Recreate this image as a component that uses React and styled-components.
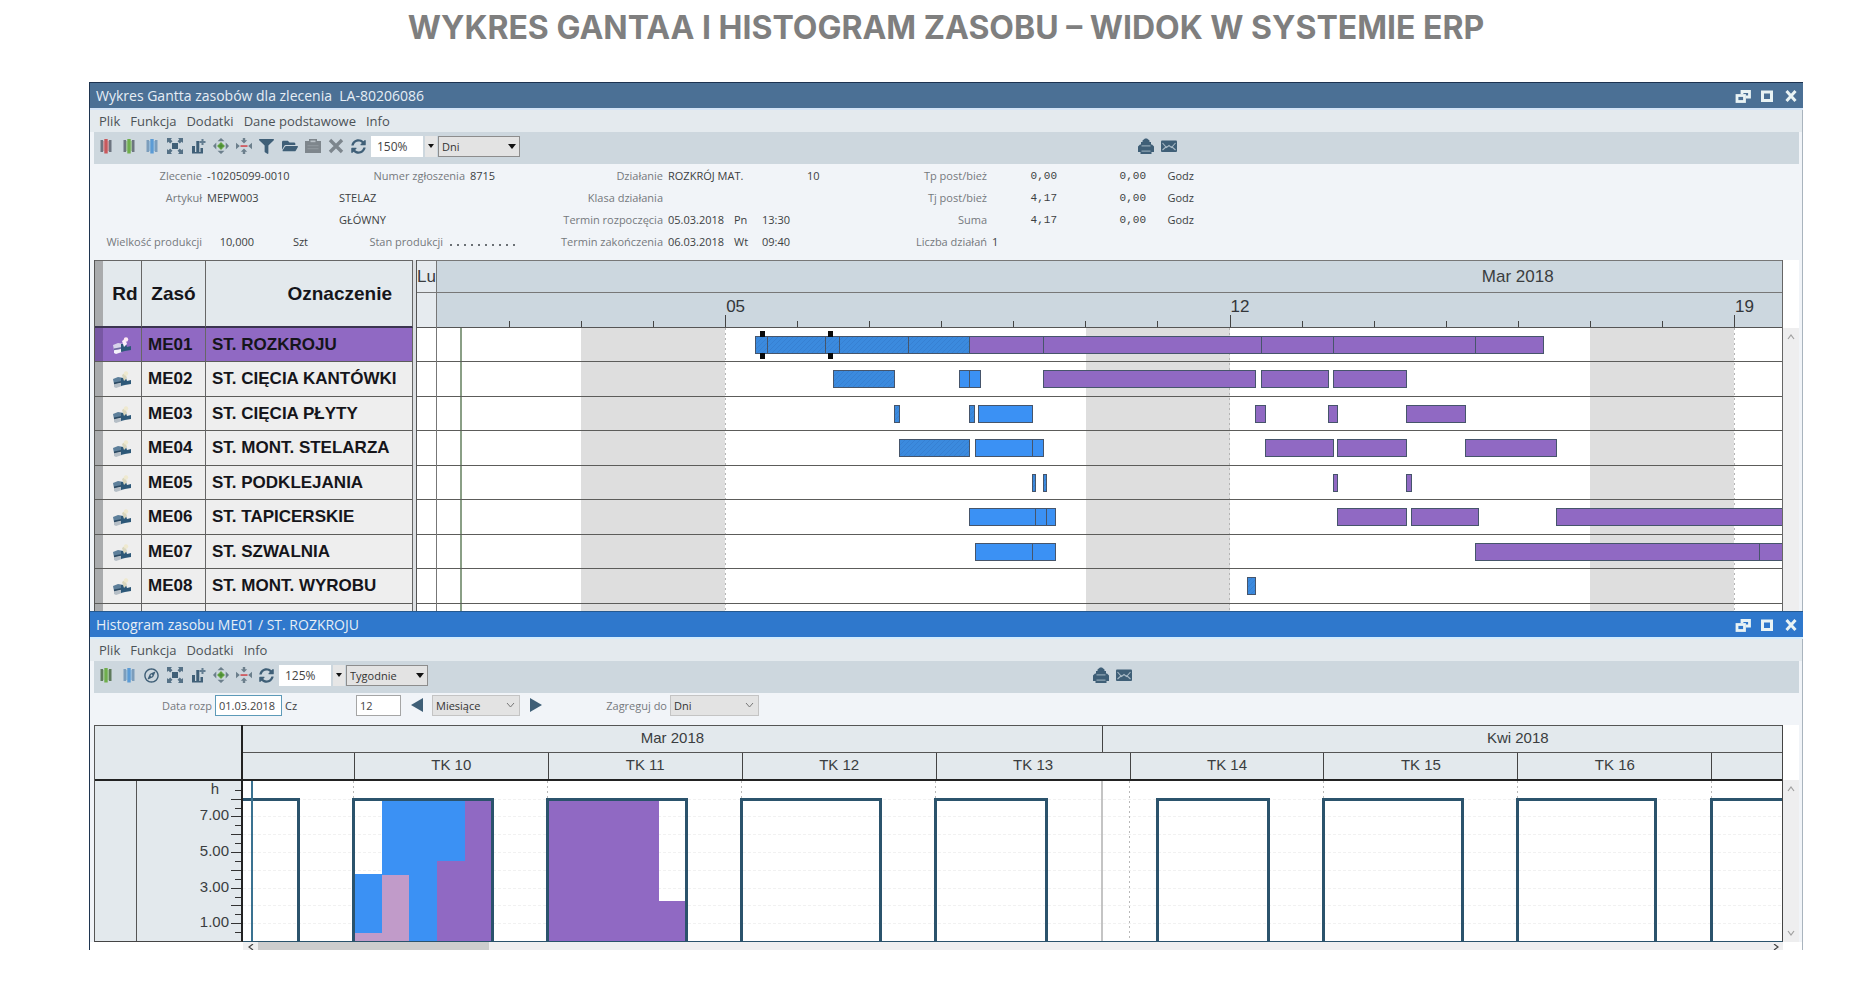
import React from 'react'
import styled, { createGlobalStyle, css } from 'styled-components'
import { FaFilter, FaFolderOpen, FaSyncAlt, FaRegCompass } from 'react-icons/fa'

// gantt time scale: hours since 1 March, 00:00
const GANTT_HOURS = 448
// histogram time scale: days since 1 March
const HIST_DAYS = 55.55
const HOUR_PX = 18
const HIST_HEIGHT = 160

const hx = (h) => `${(h / GANTT_HOURS) * 100}%`
const dx = (d) => `${(d / HIST_DAYS) * 100}%`
const laneTop = (i) => Math.floor(i * 34.5)
const loadY = (h) => HIST_HEIGHT - h * HOUR_PX + Math.round(h * 0.2)

const resources = [
  {
    id: 'ME01',
    name: 'ST. ROZKROJU',
    bars: [
      { k: 'hatch', s: [106, 110, 129.5, 134, 157, 177.5] },
      { k: 'plan', s: [177.5, 202, 274.5, 298.5, 346, 368.5] },
    ],
  },
  {
    id: 'ME02',
    name: 'ST. CIĘCIA KANTÓWKI',
    bars: [
      { k: 'hatch', s: [132, 152.5] },
      { k: 'work', s: [174, 177.5, 181] },
      { k: 'plan', s: [202, 272.5] },
      { k: 'plan', s: [274.5, 297] },
      { k: 'plan', s: [298.5, 323] },
    ],
  },
  {
    id: 'ME03',
    name: 'ST. CIĘCIA PŁYTY',
    bars: [
      { k: 'hatch', s: [152.5, 154] },
      { k: 'hatch', s: [177.5, 179] },
      { k: 'work', s: [180.5, 198.5] },
      { k: 'plan', s: [272.5, 276] },
      { k: 'plan', s: [297, 300] },
      { k: 'plan', s: [323, 342.5] },
    ],
  },
  {
    id: 'ME04',
    name: 'ST. MONT. STELARZA',
    bars: [
      { k: 'hatch', s: [154, 177.5] },
      { k: 'work', s: [179.5, 198.5, 202] },
      { k: 'plan', s: [276, 298.5] },
      { k: 'plan', s: [300, 323] },
      { k: 'plan', s: [342.5, 373] },
    ],
  },
  {
    id: 'ME05',
    name: 'ST. PODKLEJANIA',
    bars: [
      { k: 'hatch', s: [198.5, 199.5] },
      { k: 'hatch', s: [202, 203] },
      { k: 'plan', s: [298.5, 300] },
      { k: 'plan', s: [323, 324.5] },
    ],
  },
  {
    id: 'ME06',
    name: 'ST. TAPICERSKIE',
    bars: [
      { k: 'work', s: [177.5, 199.5, 203, 206] },
      { k: 'plan', s: [300, 323] },
      { k: 'plan', s: [324.5, 347] },
      { k: 'plan', s: [373, 450] },
    ],
  },
  {
    id: 'ME07',
    name: 'ST. SZWALNIA',
    bars: [
      { k: 'work', s: [179.5, 198.5, 206] },
      { k: 'plan', s: [346, 440.5, 450] },
    ],
  },
  {
    id: 'ME08',
    name: 'ST. MONT. WYROBU',
    bars: [{ k: 'hatch', s: [270, 272.5] }],
  },
]

const fills = { hatch: 'url(#hatch)', work: '#3b91f4', plan: '#9069c3' }

// [day, from hour, to hour, colour]
const load = [
  [4, 0, 0.45, '#c19bc9'],
  [4, 0.45, 3.8, '#3b91f4'],
  [5, 0, 3.7, '#c19bc9'],
  [5, 3.7, 8, '#3b91f4'],
  [6, 0, 8, '#3b91f4'],
  [7, 0, 4.5, '#9069c3'],
  [7, 4.5, 8, '#3b91f4'],
  [8, 0, 8, '#9069c3'],
  [11, 0, 8, '#9069c3'],
  [12, 0, 8, '#9069c3'],
  [13, 0, 8, '#9069c3'],
  [14, 0, 8, '#9069c3'],
  [15, 0, 2.2, '#9069c3'],
]

const capacity = [[-1, 2], [4, 9], [11, 16], [18, 23], [25, 29], [33, 37], [39, 44], [46, 51], [53, 58]]

const weeks = [
  ['', 4],
  ['TK 10', 7],
  ['TK 11', 7],
  ['TK 12', 7],
  ['TK 13', 7],
  ['TK 14', 7],
  ['TK 15', 7],
  ['TK 16', 7],
  ['', 2.55],
]

/* ---------- icons ---------- */

const dark = '#3f5f77'

const Svg = ({ children, size = 16 }) => (
  <svg width={size} height={size} viewBox="0 0 16 16" aria-hidden="true">
    {children}
  </svg>
)

const BarsIcon = ({ color, side = '#6d7580' }) => (
  <Svg>
    <path d="M2.500 2v12h2.600V2zM10.900 2v12h2.600V2z" fill={side} />
    <path d="M6.300 1h3.400v14.500H6.300z" fill={color} />
    <path d="M5 3h1.300v10H5zM9.700 3H11v10H9.700z" fill={color} opacity=".45" />
  </Svg>
)

const FitIcon = () => (
  <Svg>
    <path d="M0 0h5L3.700 1.400 5.500 3.200 3.200 5.500 1.400 3.700 0 5zM16 0v5l-1.400-1.300-1.800 1.800-2.300-2.300 1.800-1.800L11 0zM0 16v-5l1.400 1.300 1.800-1.800 2.300 2.300-1.800 1.800L5 16zM16 16h-5l1.300-1.400-1.800-1.800 2.300-2.300 1.800 1.800L16 11z" fill={dark} opacity=".85" />
    <path d="M5 5h6v6H5z" fill={dark} />
  </Svg>
)

const ChartPlusIcon = () => (
  <Svg>
    <path d="M2 8h3v7H2zM6.300 3h3v12h-3zM2 14h11v1.600H2zM10.500 10h2.500v5h-2.500z" fill={dark} />
    <path d="M11.500 1h2v2h2v2h-2v2h-2V5h-2V3h2z" fill={dark} opacity=".75" />
  </Svg>
)

const ExpandIcon = () => (
  <Svg>
    <path d="M8 0l3.500 3.300h-7zM8 16l3.500-3.300h-7zM0 8l3.300-3.500v7zM16 8l-3.300-3.500v7z" fill="#6c7f8c" />
    <path d="M8 4l4 4-4 4-4-4z" fill="#6cac4a" />
    <path d="M7.300 5.500h1.400v1.800h1.800v1.400H8.700v1.800H7.300V8.700H5.500V7.300h1.800z" fill="#4b8a35" />
  </Svg>
)

const CollapseIcon = () => (
  <Svg>
    <path d="M8 5.500L4.800 2.200h2V0h2.400v2.200h2zM8 10.500l-3.200 3.300h2V16h2.400v-2.200h2zM3.800 8L0 4.800v6.400zM12.200 8L16 4.800v6.400z" fill="#6c7f8c" />
    <path d="M4.500 7.200h7v1.700h-7z" fill="#cf5358" />
  </Svg>
)

const ClipboardIcon = () => (
  <Svg>
    <path d="M0 3h4V1h8v2h4v12H0z" fill="#7e868c" />
    <path d="M5.500 2.500h5v1.700h-5z" fill="#b9c1c7" />
    <path d="M2.500 7h11v1.200h-11zM2.500 10h11v1.200h-11z" fill="#8e969c" />
  </Svg>
)

const CrossIcon = () => (
  <Svg>
    <path d="M2 2l12 12M14 2L2 14" stroke="#7d868d" strokeWidth="3.400" fill="none" />
  </Svg>
)

const PrinterIcon = () => (
  <Svg>
    <path d="M4.500 4V2.500L7 .5h2l2.500 2V4h1.500v2.500h1l2 2V14h-2.500v2h-11v-2H0V8.500l2-2h1V4z" fill={dark} />
    <path d="M3.500 7.300h9v1.200h-9zM3.500 12.500h9v1.200h-9z" fill="#8fa5b4" />
  </Svg>
)

const MailIcon = () => (
  <Svg>
    <rect x="0" y="2.500" width="16" height="11.500" rx="1" fill={dark} />
    <path d="M1.500 5l4 4.500L8 7.500l2.500 2 4-4.500M1.500 12l4-3.500M14.500 12l-4-3.500" stroke="#a9bac6" strokeWidth="1.100" fill="none" />
  </Svg>
)

const RestoreIcon = () => (
  <Svg>
    <path d="M7 6V3.500h7.500V9H11" stroke="#e9f3f4" strokeWidth="2.800" fill="none" />
    <rect x="2" y="7.500" width="7.500" height="6" stroke="#e9f3f4" strokeWidth="2.800" fill="none" />
  </Svg>
)

const MaximizeIcon = () => (
  <Svg>
    <rect x="3.500" y="4" width="9" height="8.500" stroke="#e9f3f4" strokeWidth="3" fill="none" />
  </Svg>
)

const CloseIcon = () => (
  <Svg>
    <path d="M3.500 3l9 10M12.500 3l-9 10" stroke="#e9f3f4" strokeWidth="3" fill="none" />
  </Svg>
)

const MachineIcon = ({ light }) => (
  <svg width="20" height="20" viewBox="0 0 20 20" aria-hidden="true">
    <path d="M1 9l5-2 6 1-1 4-9 2z" fill={light ? '#d7d3ea' : '#5d7f9a'} />
    <path d="M2 14l7-1 1 3-6 2-2-1z" fill={light ? '#f3f1fa' : '#b5bec6'} />
    <path d="M2 12.500l8-1.500v1.600l-8 1.600z" fill={light ? '#6c6aa0' : '#2c4a63'} />
    <path d="M9 8h5l1 3 4-1v4l-6 1-4 1z" fill="#2d5878" />
    <path d="M10 5l3-2 2 5-3 3z" fill={light ? '#fbeefa' : '#d9d6bd'} />
    <circle cx="14" cy="3.500" r="2.200" fill={light ? '#ffe9f4' : '#efe9cf'} />
  </svg>
)

const chevrons = {
  up: 'M1 5l3-4 3 4',
  down: 'M1 1l3 4 3-4',
  left: 'M6 0L2 3l4 3',
  right: 'M2 0l4 3-4 3',
}

const Chevron = ({ dir, color = '#a0a0a0' }) => (
  <svg width="8" height="6" viewBox="0 0 8 6" aria-hidden="true">
    <path d={chevrons[dir]} stroke={color} strokeWidth="1.200" fill="none" />
  </svg>
)

/* ---------- parts ---------- */

const Window = ({ title, active, children }) => (
  <Frame>
    <TitleBar $active={active}>
      <Title>{title}</Title>
      <WindowButton aria-label="Przywróć"><RestoreIcon /></WindowButton>
      <WindowButton aria-label="Maksymalizuj"><MaximizeIcon /></WindowButton>
      <WindowButton aria-label="Zamknij"><CloseIcon /></WindowButton>
    </TitleBar>
    {children}
  </Frame>
)

const Tools = ({ items }) =>
  items.map(([label, icon]) => (
    <Tool key={label} aria-label={label}>{icon}</Tool>
  ))

const sendTools = [
  ['Drukuj', <PrinterIcon />],
  ['Wyślij', <MailIcon />],
]

const ganttTools = [
  ['Czerwone', <BarsIcon color="#c8585c" />],
  ['Zielone', <BarsIcon color="#6fae4c" />],
  ['Niebieskie', <BarsIcon color="#5b9bd5" side="#7c9dbb" />],
  ['Dopasuj', <FitIcon />],
  ['Wykres', <ChartPlusIcon />],
  ['Rozwiń', <ExpandIcon />],
  ['Zwiń', <CollapseIcon />],
  ['Filtr', <FaFilter size={15} />],
  ['Otwórz', <FaFolderOpen size={16} />],
  ['Zapisz', <ClipboardIcon />],
  ['Usuń', <CrossIcon />],
  ['Odśwież', <FaSyncAlt size={15} />],
]

const histTools = [
  ['Zielone', <BarsIcon color="#6fae4c" side="#5f7a5c" />],
  ['Niebieskie', <BarsIcon color="#5b9bd5" side="#7c9dbb" />],
  ['Kompas', <FaRegCompass size={15} />],
  ['Dopasuj', <FitIcon />],
  ['Wykres', <ChartPlusIcon />],
  ['Rozwiń', <ExpandIcon />],
  ['Zwiń', <CollapseIcon />],
  ['Odśwież', <FaSyncAlt size={15} />],
]

const OrderInfo = () => (
  <Info>
    <InfoGroup $w={245}>
      <InfoRow><Label $w={108}>Zlecenie</Label><Value>-10205099-0010</Value></InfoRow>
      <InfoRow><Label $w={108}>Artykuł</Label><Value>MEPW003</Value></InfoRow>
      <InfoRow />
      <InfoRow>
        <Label $w={108}>Wielkość produkcji</Label>
        <Value $w={47} $right>10,000</Value>
        <Value $w={49} $right>Szt</Value>
      </InfoRow>
    </InfoGroup>
    <InfoGroup $w={216}>
      <InfoRow><Label $w={126}>Numer zgłoszenia</Label><Value>8715</Value></InfoRow>
      <InfoRow><Value>STELAZ</Value></InfoRow>
      <InfoRow><Value>GŁÓWNY</Value></InfoRow>
      <InfoRow><Label $w={104}>Stan produkcji</Label><Dots /></InfoRow>
    </InfoGroup>
    <InfoGroup $w={340}>
      <InfoRow><Label $w={108}>Działanie</Label><Value $w={134}>ROZKRÓJ MAT.</Value><Value>10</Value></InfoRow>
      <InfoRow><Label $w={108}>Klasa działania</Label></InfoRow>
      <InfoRow>
        <Label $w={108}>Termin rozpoczęcia</Label>
        <Value $w={61}>05.03.2018</Value><Value $w={23}>Pn</Value><Value>13:30</Value>
      </InfoRow>
      <InfoRow>
        <Label $w={108}>Termin zakończenia</Label>
        <Value $w={61}>06.03.2018</Value><Value $w={23}>Wt</Value><Value>09:40</Value>
      </InfoRow>
    </InfoGroup>
    <InfoGroup $w={320}>
      {[['Tp post/bież', '0,00'], ['Tj post/bież', '4,17'], ['Suma', '4,17']].map(([label, v]) => (
        <InfoRow key={label}>
          <Label $w={92}>{label}</Label>
          <Value $w={65} $right $mono>{v}</Value>
          <Value $w={84} $right $mono>0,00</Value>
          <Value $w={43} $right>Godz</Value>
        </InfoRow>
      ))}
      <InfoRow><Label $w={92}>Liczba działań</Label><Value>1</Value></InfoRow>
    </InfoGroup>
  </Info>
)

const LaneLines = () =>
  resources.map((r, i) => (
    <line key={r.id} x1="0" x2="100%" y1={laneTop(i + 1) - 0.5} y2={laneTop(i + 1) - 0.5} stroke="#5c5c5a" />
  ))

const GanttPlot = () => (
  <Plot height="284" shapeRendering="crispEdges" role="img" aria-label="Wykres Gantta">
    <defs>
      <pattern id="hatch" width="5" height="5" patternUnits="userSpaceOnUse">
        <rect width="5" height="5" fill="#3b8ade" />
        <path d="M0 5L5 0" stroke="#3780d2" strokeWidth="1" shapeRendering="auto" />
      </pattern>
    </defs>
    {[48, 216, 384].map((h) => (
      <g key={h}>
        <rect x={hx(h)} y="0" width={hx(48)} height="284" fill="#dedede" />
        <line x1={hx(h + 48)} x2={hx(h + 48)} y1="0" y2="284" stroke="#b5b5b5" strokeDasharray="2 3" />
      </g>
    ))}
    <line x1={hx(8)} x2={hx(8)} y1="0" y2="284" stroke="#8a9f86" strokeWidth="2" />
    <LaneLines />
    {resources.map((r, i) =>
      r.bars.map((b) => {
        const y = laneTop(i) + 8
        const end = b.s[b.s.length - 1]
        return (
          <g key={b.s[0]} stroke="#46556b" strokeWidth="1">
            <rect x={hx(b.s[0])} y={y + 0.5} width={hx(end - b.s[0])} height="17" fill={fills[b.k]} />
            {b.s.slice(1, -1).map((s) => (
              <line key={s} x1={hx(s)} x2={hx(s)} y1={y} y2={y + 18} />
            ))}
          </g>
        )
      })
    )}
    {[108.5, 131].map((h) => (
      <g key={h} stroke="#0a0a0a" strokeWidth="5">
        <line x1={hx(h)} x2={hx(h)} y1="3" y2="9" />
        <line x1={hx(h)} x2={hx(h)} y1="25" y2="31" />
      </g>
    ))}
  </Plot>
)

const Gantt = () => (
  <GanttBody>
    <ResourceTable>
      <thead>
        <tr>
          <th className="strip" />
          <th className="rd">Rd</th>
          <th className="code">Zasó</th>
          <th className="name">Oznaczenie</th>
        </tr>
      </thead>
      <tbody>
        {resources.map((r, i) => (
          <ResourceRow key={r.id} $selected={i === 0}>
            <td className="strip" />
            <td className="rd"><MachineIcon light={i === 0} /></td>
            <td>{r.id}</td>
            <td>{r.name}</td>
          </ResourceRow>
        ))}
        <ResourceRow>
          <td className="strip" /><td /><td /><td />
        </ResourceRow>
      </tbody>
    </ResourceTable>
    <Splitter />
    <SideColumn>
      <MonthBand $light>Lu</MonthBand>
      <DayBand $light />
      <Plot height="284" shapeRendering="crispEdges" aria-hidden="true">
        <LaneLines />
      </Plot>
    </SideColumn>
    <Timeline>
      <MonthBand>
        <MonthLabel style={{ width: hx(30 * 24) }}>Mar 2018</MonthLabel>
      </MonthBand>
      <DayBand>
        {[...Array(18)].map((_, i) => {
          const day = i + 2
          const monday = day % 7 === 5
          return (
            <DayTick key={day} $tall={monday} style={{ left: hx((day - 1) * 24) }}>
              {monday && <DayLabel>{String(day).padStart(2, '0')}</DayLabel>}
            </DayTick>
          )
        })}
      </DayBand>
      <GanttPlot />
    </Timeline>
    <Gutter $top={68}>
      <Chevron dir="up" />
    </Gutter>
  </GanttBody>
)

const Axis = () => (
  <AxisSvg shapeRendering="crispEdges">
    {[...Array(17)].map((_, i) => {
      const h = (i + 1) / 2
      return <line key={h} x1={h % 1 ? 98 : 94} x2="104" y1={loadY(h)} y2={loadY(h)} stroke="#333" />
    })}
    <text x="78" y="13" textAnchor="middle">h</text>
    {[7, 5, 3, 1].map((h) => (
      <text key={h} x="92" y={loadY(h) + 4} textAnchor="end">{h}.00</text>
    ))}
  </AxisSvg>
)

const HistogramPlot = () => {
  const top = loadY(8)
  return (
    <Plot height={HIST_HEIGHT} shapeRendering="crispEdges" role="img" aria-label="Histogram zasobu">
      {[1, 2, 3, 4, 5, 6, 7, 8].map((h) => (
        <line key={h} x1="0" x2="100%" y1={loadY(h)} y2={loadY(h)} stroke="#f1f1f1" strokeDasharray="3 2" />
      ))}
      {[4, 11, 18, 25, 32, 39, 46, 53].map((d) => (
        <line key={d} x1={dx(d)} x2={dx(d)} y1="0" y2={HIST_HEIGHT} stroke="#b8b8b8" strokeDasharray="2 3" />
      ))}
      <line x1={dx(31)} x2={dx(31)} y1="0" y2={HIST_HEIGHT} stroke="#c4c4c4" strokeWidth="2" />
      {load.map(([d, from, to, color]) => (
        <rect key={`${d}-${from}`} x={dx(d)} y={loadY(to)} width={dx(1.02)} height={loadY(from) - loadY(to)} fill={color} />
      ))}
      {capacity.map(([from, to]) => (
        <g key={from} stroke="#2b536c" strokeWidth="3">
          <line x1={dx(from)} x2={dx(from)} y1={top - 1} y2={HIST_HEIGHT} />
          <line x1={dx(from)} x2={dx(to)} y1={top} y2={top} />
          <line x1={dx(to)} x2={dx(to)} y1={top - 1} y2={HIST_HEIGHT} />
        </g>
      ))}
      <line x1={dx(0.34)} x2={dx(0.34)} y1="0" y2={HIST_HEIGHT} stroke="#3a7291" strokeWidth="2" />
    </Plot>
  )
}

const Histogram = () => (
  <HistBody>
    <AxisPane>
      <AxisHead />
      <AxisArea>
        <AxisStrip />
        <Axis />
      </AxisArea>
    </AxisPane>
    <HistTimeline>
      <HeadCells $cols="31fr 24.55fr" $h={27}>
        <HeadCell>Mar 2018</HeadCell>
        <HeadCell $start>
          <MonthLabel style={{ width: `${(30 / 24.55) * 100}%` }}>Kwi 2018</MonthLabel>
        </HeadCell>
      </HeadCells>
      <HeadCells $cols={weeks.map((w) => `${w[1]}fr`).join(' ')} $h={29} $last>
        {weeks.map(([name], i) => <HeadCell key={i}>{name}</HeadCell>)}
      </HeadCells>
      <HistogramPlot />
    </HistTimeline>
    <Gutter $top={55}>
      <Chevron dir="up" />
      <Chevron dir="down" />
    </Gutter>
  </HistBody>
)

const App = () => (
  <Page>
    <GlobalStyle />
    <Heading>WYKRES GANTAA I HISTOGRAM ZASOBU – WIDOK W SYSTEMIE ERP</Heading>
    <Screen>
      <Window title={'Wykres Gantta zasobów dla zlecenia\u00a0 LA-80206086'}>
        <Menu>
          {['Plik', 'Funkcja', 'Dodatki', 'Dane podstawowe', 'Info'].map((m) => <MenuItem key={m}>{m}</MenuItem>)}
        </Menu>
        <Toolbar>
          <ToolbarMain $basis="61%">
            <Tools items={ganttTools} />
            <ZoomInput aria-label="Powiększenie" defaultValue="150%" />
            <DropButton aria-label="Lista powiększeń" />
            <Select $solid $w={82} aria-label="Skala" defaultValue="Dni"><option>Dni</option></Select>
          </ToolbarMain>
          <Tools items={sendTools} />
        </Toolbar>
        <OrderInfo />
        <Gantt />
      </Window>
      <Window title="Histogram zasobu ME01 / ST. ROZKROJU" active>
        <Menu>
          {['Plik', 'Funkcja', 'Dodatki', 'Info'].map((m) => <MenuItem key={m}>{m}</MenuItem>)}
        </Menu>
        <Toolbar>
          <ToolbarMain $basis="58.4%">
            <Tools items={histTools} />
            <ZoomInput aria-label="Powiększenie" defaultValue="125%" />
            <DropButton aria-label="Lista powiększeń" />
            <Select $solid $w={82} aria-label="Skala" defaultValue="Tygodnie"><option>Tygodnie</option></Select>
          </ToolbarMain>
          <Tools items={sendTools} />
        </Toolbar>
        <Filters>
          <Label as="label" htmlFor="from" $w={118}>Data rozp</Label>
          <TextInput id="from" $w={67} $focus defaultValue="01.03.2018" />
          <Value $w={68}>Cz</Value>
          <TextInput aria-label="Liczba okresów" $w={45} defaultValue="12" />
          <ArrowButton aria-label="Wstecz">
            <svg width="12" height="14" viewBox="0 0 12 14"><path d="M12 0v14L0 7z" fill={dark} /></svg>
          </ArrowButton>
          <Select $w={88} aria-label="Okres" defaultValue="Miesiące"><option>Miesiące</option></Select>
          <ArrowButton aria-label="Dalej">
            <svg width="12" height="14" viewBox="0 0 12 14"><path d="M0 0v14l12-7z" fill={dark} /></svg>
          </ArrowButton>
          <Label as="label" htmlFor="agg" $w={116}>Zagreguj do</Label>
          <Select id="agg" $w={89} defaultValue="Dni"><option>Dni</option></Select>
        </Filters>
        <Histogram />
        <ScrollRow>
          <ScrollTrack>
            <ScrollArrow><Chevron dir="left" color="#444" /></ScrollArrow>
            <ScrollThumb />
            <ScrollArrow $end><Chevron dir="right" color="#444" /></ScrollArrow>
          </ScrollTrack>
        </ScrollRow>
      </Window>
    </Screen>
  </Page>
)

/* ---------- styles ---------- */

const GlobalStyle = createGlobalStyle`
  * {
    box-sizing: border-box;
  }

  body {
    margin: 0;
    background: #fff;
    font-family: "Open Sans", "Noto Sans", sans-serif;
  }

  button {
    padding: 0;
    border: 0;
    background: none;
  }
`

const Page = styled.main`
  padding: 8px 51px 32px 89px;
`

const Heading = styled.h1`
  margin: 0 0 34px;
  color: #7f7f7f;
  font-family: Inter, "Open Sans", sans-serif;
  font-size: 32px;
  font-weight: 700;
  line-height: 40px;
  text-align: center;
`

const Screen = styled.div`
  min-width: 1200px;
`

const Frame = styled.section`
  border-left: 1px solid #1f3550;
  border-right: 1px solid #a9b4be;
  background: #f1f4f8;
`

const TitleBar = styled.header`
  display: flex;
  align-items: center;
  gap: 7px;
  height: 28px;
  margin-right: -1px;
  padding: 0 4px 0 6px;
  border-top: 1px solid ${(p) => (p.$active ? '#24588f' : '#1c3250')};
  border-bottom: 2px solid ${(p) => (p.$active ? '#d3ecfd' : '#d3e4f7')};
  background: ${(p) => (p.$active ? '#2f78cc' : '#4b7095')};
`

const Title = styled.h2`
  flex: 1;
  margin: 0;
  color: #e6eef5;
  font-size: 14px;
  font-weight: 400;
  line-height: 20px;
`

const WindowButton = styled.button`
  width: 17px;
  height: 16px;
`

const Menu = styled.nav`
  display: flex;
  gap: 10px;
  height: 22px;
  padding: 0 9px;
  background: #e4eaee;
`

const MenuItem = styled.button`
  color: #4c5257;
  font: 13px/22px "Open Sans", "Noto Sans", sans-serif;
`

const Toolbar = styled.div`
  display: flex;
  align-items: center;
  height: 32px;
  margin: 0 3px 0 4px;
  padding-bottom: 4px;
  background: #cdd7de;
`

const ToolbarMain = styled.div`
  display: flex;
  flex: 0 0 ${(p) => p.$basis};
  align-items: center;
`

const Tool = styled.button`
  display: flex;
  align-items: center;
  justify-content: center;
  width: 23px;
  height: 20px;
  color: ${dark};
`

const ZoomInput = styled.input`
  width: 52px;
  height: 21px;
  margin: 0 2px 0 1px;
  padding: 0 6px;
  border: 0;
  background: #fff;
  color: #444;
  font: 12px "Open Sans", "Noto Sans", sans-serif;
`

const DropButton = styled.button`
  display: flex;
  align-items: center;
  justify-content: center;
  width: 12px;
  height: 21px;
  margin-right: 1px;
  background: #e6e6e6;

  &::before {
    content: '';
    border: 3px solid transparent;
    border-top: 4px solid #111;
    border-bottom: 0;
  }
`

const caretSolid = `url("data:image/svg+xml,%3Csvg xmlns='http://www.w3.org/2000/svg' width='8' height='5'%3E%3Cpath d='M0 0h8L4 5z' fill='%23111'/%3E%3C/svg%3E")`
const caretThin = `url("data:image/svg+xml,%3Csvg xmlns='http://www.w3.org/2000/svg' width='9' height='6'%3E%3Cpath d='M1 1l3.5 4L8 1' fill='none' stroke='%23777'/%3E%3C/svg%3E")`

const Select = styled.select`
  width: ${(p) => p.$w}px;
  height: 21px;
  padding: 0 3px;
  border: 1px solid ${(p) => (p.$solid ? '#8d8d8d' : '#c4c4c4')};
  border-radius: 0;
  appearance: none;
  background: ${(p) => (p.$solid ? caretSolid : caretThin)} no-repeat right ${(p) => (p.$solid ? 3 : 4)}px center #e3e3e3;
  color: #333;
  font: 11px "Open Sans", "Noto Sans", sans-serif;
`

const Info = styled.div`
  display: flex;
  padding: 1px 0 7px 4px;
`

const InfoGroup = styled.div`
  flex: 0 0 ${(p) => p.$w}px;
`

const InfoRow = styled.div`
  display: flex;
  gap: 5px;
  height: 22px;
  line-height: 22px;
`

const Label = styled.span`
  flex: 0 0 ${(p) => p.$w}px;
  color: #75797d;
  font-size: 11px;
  text-align: right;
  white-space: nowrap;
`

const Value = styled.span`
  flex: 0 0 ${(p) => (p.$w ? `${p.$w}px` : 'auto')};
  color: #3c3f42;
  font-family: ${(p) => (p.$mono ? '"Liberation Mono", monospace' : 'inherit')};
  font-size: 11px;
  text-align: ${(p) => (p.$right ? 'right' : 'left')};
  white-space: nowrap;
`

const Dots = styled.span`
  align-self: center;
  width: 65px;
  height: 2px;
  margin: 5px 0 0 2px;
  background: repeating-linear-gradient(90deg, #6b7075 0 2px, transparent 2px 7px);
`

const GanttBody = styled.div`
  display: flex;
  height: 351px;
  margin: 0 3px 0 4px;
  overflow: hidden;
`

const ResourceTable = styled.table`
  flex: 0 0 319px;
  width: 319px;
  table-layout: fixed;
  border-collapse: separate;
  border-spacing: 0;
  border-left: 1px solid #555;
  color: #15151a;
  font-family: "Liberation Sans", Arial, sans-serif;
  font-size: 17px;
  font-weight: 700;

  th {
    height: 68px;
    padding: 0 2px;
    border-top: 1px solid #666;
    border-right: 1px solid #666;
    border-bottom: 2px solid #3b3550;
    background: #e3e9ed;
    font-size: 19px;
    text-align: center;
  }

  td {
    padding: 0 0 0 6px;
    border-right: 1px solid #666;
    border-bottom: 1px solid #5c5c5a;
    white-space: nowrap;
  }

  .strip {
    width: 8px;
    padding: 0;
    border-right: 0;
    background: #a9abad;
  }

  .rd {
    width: 39px;
  }

  th.rd {
    padding: 0 0 0 6px;
  }

  .code {
    width: 64px;
  }

  th.name {
    padding-right: 20px;
    text-align: right;
  }

  td.rd {
    padding: 2px 0 0 9px;
    line-height: 0;
  }
`

const ResourceRow = styled.tr`
  height: 34px;
  background: #eee;

  &:nth-child(even) {
    height: 35px;
  }

  ${(p) =>
    p.$selected &&
    css`
      background: #9069c3;

      .strip {
        background: #7757a3;
      }
    `}
`

const Splitter = styled.div`
  flex: 0 0 3px;
  background: #dcdfe2;
`

const SideColumn = styled.div`
  flex: 0 0 19px;
  border-left: 1px solid #555;
  border-right: 1px solid #777;
  background: #fff;
`

const Timeline = styled.div`
  flex: 1;
  min-width: 0;
  overflow: hidden;
  border-right: 1px solid #666;
  background: #fff;
`

const MonthBand = styled.div`
  display: flex;
  align-items: center;
  height: 33px;
  border-top: 1px solid #777;
  border-bottom: 1px solid #777;
  background: ${(p) => (p.$light ? '#e6ebef' : '#ccd7df')};
  color: #3a3d40;
  font: 17px "Liberation Sans", Arial, sans-serif;
  overflow: hidden;
`

const DayBand = styled.div`
  position: relative;
  height: 35px;
  border-bottom: 1px solid #555;
  background: ${(p) => (p.$light ? '#e6ebef' : '#ccd7df')};
`

const DayTick = styled.div`
  position: absolute;
  bottom: 0;
  height: ${(p) => (p.$tall ? 12 : 6)}px;
  border-left: 1px solid #444;
`

const DayLabel = styled.span`
  position: absolute;
  bottom: 9px;
  color: #33363a;
  font: 17px/22px "Liberation Sans", Arial, sans-serif;
`

const MonthLabel = styled.span`
  flex: none;
  text-align: center;
`

const Plot = styled.svg`
  display: block;
  width: 100%;
`

const Gutter = styled.div`
  display: flex;
  flex: 0 0 16px;
  flex-direction: column;
  align-items: center;
  justify-content: space-between;
  padding: 6px 0;
  border-top: ${(p) => p.$top}px solid #fff;
  background: #eeeeef;
`

const Filters = styled.form`
  display: flex;
  align-items: center;
  gap: 3px;
  height: 32px;
  padding: 0 0 8px 4px;
`

const TextInput = styled.input`
  width: ${(p) => p.$w}px;
  height: 21px;
  padding: 0 3px;
  border: 1px solid ${(p) => (p.$focus ? '#5d9ab8' : '#a5a5a5')};
  background: #fff;
  color: #444;
  font: 11px "Open Sans", "Noto Sans", sans-serif;
`

const ArrowButton = styled.button`
  display: flex;
  justify-content: center;
  width: 25px;
`

const HistBody = styled.div`
  display: flex;
  margin: 0 3px 0 4px;
`

const AxisPane = styled.div`
  flex: 0 0 149px;
  min-width: 0;
  border-left: 1px solid #555;
  border-right: 2px solid #222;
  border-bottom: 1px solid #444;
  background: #e3e9ed;
`

const AxisHead = styled.div`
  height: 56px;
  border-top: 1px solid #555;
  border-bottom: 2px solid #222;
`

const AxisArea = styled.div`
  display: flex;
  height: ${HIST_HEIGHT}px;
`

const AxisStrip = styled.div`
  flex: 1;
  border-right: 1px solid #555;
`

const AxisSvg = styled.svg`
  flex: none;
  width: 104px;
  height: ${HIST_HEIGHT}px;
  fill: #3a3d40;
  font: 15px "Liberation Sans", Arial, sans-serif;
`

const HistTimeline = styled.div`
  flex: 1;
  min-width: 0;
  border-right: 1px solid #444;
  border-bottom: 1px solid #2b536c;
  background: #fff;
`

const HeadCells = styled.div`
  display: grid;
  grid-template-columns: ${(p) => p.$cols};
  height: ${(p) => p.$h}px;
  border-top: 1px solid #555;
  border-bottom: ${(p) => (p.$last ? '2px solid #222' : 0)};
  background: #e3e9ed;
`

const HeadCell = styled.div`
  display: flex;
  align-items: center;
  justify-content: ${(p) => (p.$start ? 'flex-start' : 'center')};
  min-width: 0;
  padding-bottom: 4px;
  overflow: hidden;
  color: #3a3d40;
  font: 15px "Liberation Sans", Arial, sans-serif;

  & + & {
    border-left: 1px solid #444;
  }
`

const ScrollRow = styled.div`
  height: 8px;
  padding: 0 19px 0 153px;
  background: #fff;
`

const ScrollTrack = styled.div`
  display: flex;
  height: 8px;
  background: #efeff0;
`

const ScrollThumb = styled.div`
  width: 15%;
  background: #cdcdcd;
`

const ScrollArrow = styled.span`
  display: flex;
  align-items: flex-end;
  justify-content: center;
  width: 15px;
  margin-left: ${(p) => (p.$end ? 'auto' : 0)};
`

export default App
